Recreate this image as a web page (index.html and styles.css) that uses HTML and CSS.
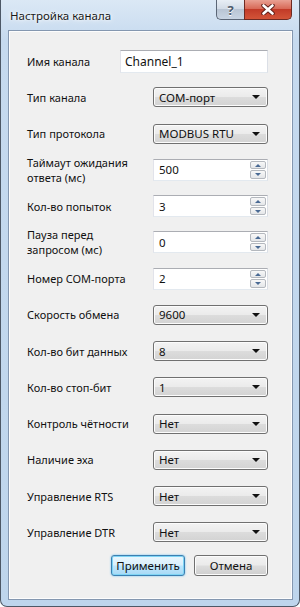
FILE: index.html
```html
<!DOCTYPE html>
<html lang="ru">
<head>
  <meta charset="UTF-8">
  <meta name="viewport" content="width=device-width, initial-scale=1.0">
  <title>Настройка канала</title>
  <link rel="stylesheet" href="styles.css">
</head>
<body>
  <div class="window">
    <div class="titlebar">
      <span class="title">Настройка канала</span>
      <div class="caption">
        <div class="cap help">?</div>
        <div class="cap close">
          <svg width="14" height="11" viewBox="0 0 14 11"><path d="M2.5 1.5 L11.5 9.5 M11.5 1.5 L2.5 9.5" stroke="#5a1a14" stroke-width="4.4" stroke-linecap="round"/><path d="M2.5 1.5 L11.5 9.5 M11.5 1.5 L2.5 9.5" stroke="#fff" stroke-width="2.6" stroke-linecap="round"/></svg>
        </div>
      </div>
    </div>

    <div class="panel">
      <div class="form">
        <div class="row name">
          <span class="label">Имя канала</span>
          <div class="field text">Channel_1</div>
        </div>
        <div class="row">
          <span class="label">Тип канала</span>
          <div class="combo"><span>COM-порт</span><i class="arrow"></i></div>
        </div>
        <div class="row">
          <span class="label">Тип протокола</span>
          <div class="combo"><span>MODBUS RTU</span><i class="arrow"></i></div>
        </div>
        <div class="row">
          <span class="label two">Таймаут ожидания<br>ответа (мс)</span>
          <div class="field spin"><span class="val">500</span><div class="spinbtns"><b class="up"></b><b class="down"></b></div></div>
        </div>
        <div class="row">
          <span class="label">Кол-во попыток</span>
          <div class="field spin"><span class="val">3</span><div class="spinbtns"><b class="up"></b><b class="down"></b></div></div>
        </div>
        <div class="row">
          <span class="label two">Пауза перед<br>запросом (мс)</span>
          <div class="field spin"><span class="val">0</span><div class="spinbtns"><b class="up"></b><b class="down"></b></div></div>
        </div>
        <div class="row">
          <span class="label">Номер COM-порта</span>
          <div class="field spin"><span class="val">2</span><div class="spinbtns"><b class="up"></b><b class="down"></b></div></div>
        </div>
        <div class="row">
          <span class="label">Скорость обмена</span>
          <div class="combo"><span>9600</span><i class="arrow"></i></div>
        </div>
        <div class="row">
          <span class="label">Кол-во бит данных</span>
          <div class="combo"><span>8</span><i class="arrow"></i></div>
        </div>
        <div class="row">
          <span class="label">Кол-во стоп-бит</span>
          <div class="combo"><span>1</span><i class="arrow"></i></div>
        </div>
        <div class="row">
          <span class="label">Контроль чётности</span>
          <div class="combo"><span>Нет</span><i class="arrow"></i></div>
        </div>
        <div class="row">
          <span class="label">Наличие эха</span>
          <div class="combo"><span>Нет</span><i class="arrow"></i></div>
        </div>
        <div class="row">
          <span class="label">Управление RTS</span>
          <div class="combo"><span>Нет</span><i class="arrow"></i></div>
        </div>
        <div class="row">
          <span class="label">Управление DTR</span>
          <div class="combo"><span>Нет</span><i class="arrow"></i></div>
        </div>
      </div>

      <div class="actions">
        <div class="btn default">Применить</div>
        <div class="btn">Отмена</div>
      </div>
    </div>
  </div>
</body>
</html>
```

FILE: styles.css
```css
* { box-sizing: border-box; }
html, body { margin: 0; padding: 0; }
body { width: 300px; height: 607px; background: #fff; font-family: "Noto Sans", "Open Sans", sans-serif; font-size: 11px; color: #111; }

.window {
  width: 300px; height: 607px;
  display: flex; flex-direction: column;
  background: linear-gradient(#dbe8f5, #c6daef 40px, #bed5ec);
  border: 1px solid #4d5866; border-top: none;
  border-radius: 0 0 7px 7px;
  padding: 0 6px 6px 7px;
}

.titlebar { height: 30px; flex: none; display: flex; align-items: flex-start; }
.title { padding: 8px 0 0 2px; font-size: 11.5px; color: #1a1a1a; text-shadow: 0 0 6px #fff, 0 0 3px #fff; }
.caption { margin-left: auto; display: flex; margin-right: 1px; }
.cap { height: 20px; border: 1px solid #5b6676; border-top: none; display: flex; align-items: center; justify-content: center; }
.help {
  width: 28px; border-radius: 0 0 0 5px; border-right: none;
  background: linear-gradient(#e8eef5, #d3dce7 45%, #b9c5d4 50%, #c9d5e3);
  color: #4c5a6c; font-weight: bold; font-size: 13px; text-shadow: 0 1px 0 #fff;
}
.close {
  width: 48px; border-radius: 0 0 5px 0; border-color: #6e2a22;
  background: linear-gradient(#e9a193, #d86a58 45%, #c23b28 50%, #d35438);
}

.panel {
  flex: 1; display: flex; flex-direction: column;
  background: #f0f0f0;
  border: 1px solid #8497b0;
  box-shadow: inset 0 0 0 1px #fdfdfd;
}

.form { padding: 12px 24px 0 18px; }
.row { height: 36.25px; display: flex; align-items: center; }
.label { width: 126px; flex: none; line-height: 15px; }
.row.name .label { width: 93px; }

.field { background: #fff; border: 1px solid #abadb3; border-left-color: #e2e3ea; border-right-color: #dbdfe6; border-bottom-color: #e3e9ef; }
.text { width: 148px; height: 23px; padding: 2px 4px; line-height: 17px; font-size: 12px; }
.spin { width: 115px; height: 22px; display: flex; align-items: center; padding: 1px 1px 1px 0; }
.spin .val { flex: 1; padding-left: 5px; font-size: 11.5px; }
.spinbtns { width: 16px; height: 18px; display: flex; flex-direction: column; gap: 1px; }
.spinbtns b {
  flex: 1; position: relative;
  border: 1px solid #b4b8be; border-radius: 2px;
  background: linear-gradient(#f8f8f8, #e4e6e9);
}
.spinbtns b::after {
  content: ""; position: absolute; left: 4px; top: 2px;
  border-left: 3px solid transparent; border-right: 3px solid transparent;
}
.spinbtns .up::after { border-bottom: 3px solid #4a6a94; }
.spinbtns .down::after { border-top: 3px solid #4a6a94; }

.combo {
  width: 115px; height: 20px; display: flex; align-items: center;
  border: 1px solid #707070; border-radius: 3px;
  background: linear-gradient(#f3f3f3, #ebebeb 48%, #dcdcdc 52%, #d3d3d3);
  box-shadow: inset 0 0 0 1px #fcfcfc;
  padding: 0 7px 0 5px;
  font-size: 11.5px;
}
.combo span { flex: 1; }
.arrow { width: 0; height: 0; border-left: 4px solid transparent; border-right: 4px solid transparent; border-top: 4px solid #111; }

.actions { display: flex; justify-content: flex-end; gap: 9px; padding: 4px 24px 0 0; }
.btn {
  width: 74px; height: 21px; display: flex; align-items: center; justify-content: center;
  border: 1px solid #707070; border-radius: 3px;
  background: linear-gradient(#f2f2f2, #ebebeb 48%, #dddddd 52%, #cfcfcf);
  box-shadow: inset 0 0 0 1px #fcfcfc;
  font-size: 11.5px;
}
.btn.default {
  border-color: #3c7fb1;
  background: linear-gradient(#eaf6fd, #d9f0fc 48%, #bee6fd 52%, #a7d9f5);
  box-shadow: inset 0 0 0 1px #7fd5f5, 0 0 2px #5bbcef;
}
```
